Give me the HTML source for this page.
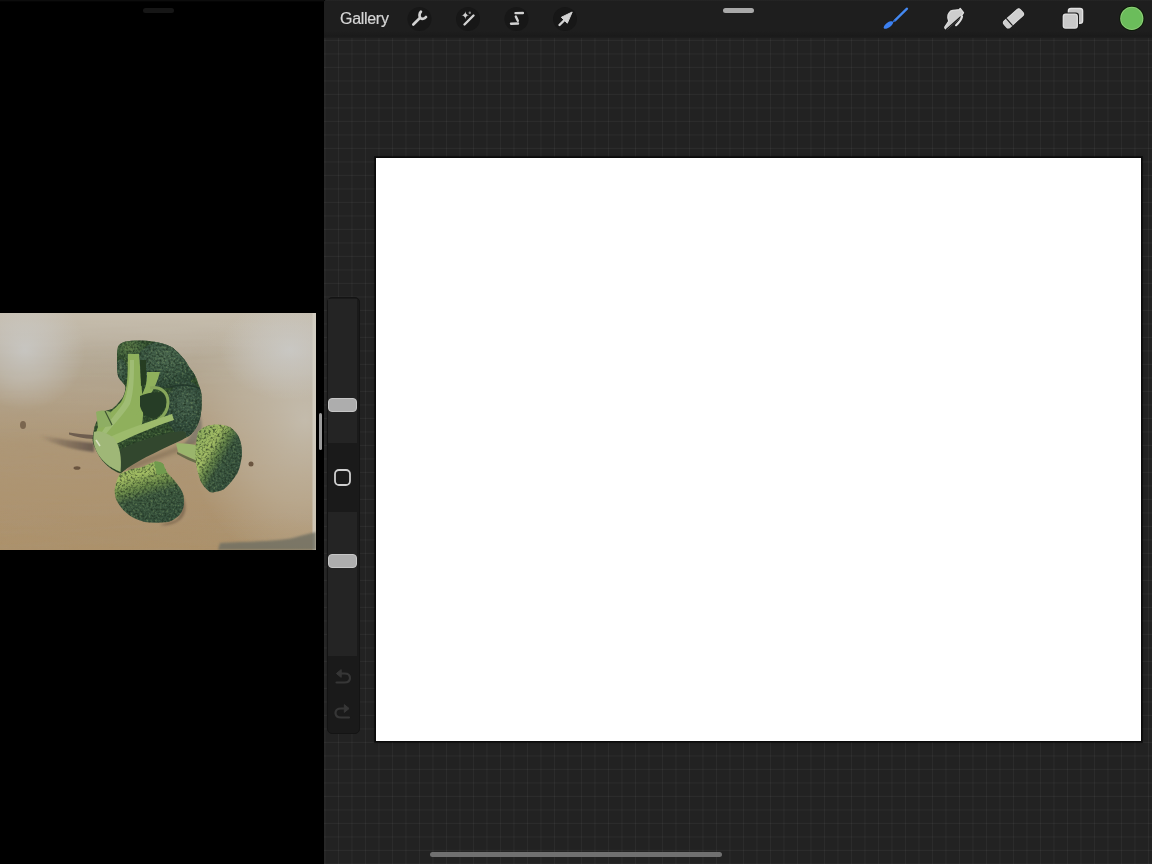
<!DOCTYPE html>
<html><head><meta charset="utf-8">
<style>
*{margin:0;padding:0;box-sizing:border-box}
html,body{width:1152px;height:864px;overflow:hidden;background:#000;font-family:"Liberation Sans",sans-serif}
.abs{position:absolute}
#lhandle{left:143px;top:8px;width:31px;height:5px;border-radius:3px;background:#161616}
#photo{left:0;top:313px;width:316px;height:237px}
#split{left:319px;top:413px;width:3px;height:37px;border-radius:2px;background:#9c9c9c}
#right{left:324px;top:0;width:828px;height:864px;background-color:#222222;
 background-image:linear-gradient(90deg, rgba(255,255,255,0.045) 1px, transparent 1px),linear-gradient(0deg, rgba(255,255,255,0.045) 1px, transparent 1px);
 background-size:13.5px 13.5px,13.5px 13.5px;background-position:0.5px 0,0 13.9px;
 border-top-left-radius:3px;overflow:hidden}
#topbar{left:324px;top:0;width:828px;height:38px;background:linear-gradient(#262626 0,#1e1e1e 1.5px,#1e1e1e 31px,#1a1a1a 36px,#1e1e1e 38px);border-top-left-radius:3px}
#thandle{left:723px;top:8px;width:31px;height:5px;border-radius:3px;background:#a9a9a9}
#gallery{left:340px;top:9.5px;font-size:16px;color:#d6d6d6;letter-spacing:-0.3px;will-change:transform;-webkit-font-smoothing:antialiased;-webkit-text-stroke:0.2px #d6d6d6}
#canvas{left:375px;top:157px;width:767px;height:585px;background:#fff;border:1px solid #0a0a0a;box-shadow:0 0 0 1px rgba(0,0,0,0.45),0 0 3px rgba(0,0,0,0.4)}
#sidebar{left:327px;top:297px;width:33px;height:437px;background:#1a1a1a;border-radius:5px;border:1px solid #141414}
.track{left:328px;width:29px;background:#242424}
.thumb{left:328px;width:29px;height:14px;border-radius:4px;background:#adadad;border:1px solid #c6c6c6}
#home{left:430px;top:852px;width:292px;height:5px;border-radius:3px;background:#707070}
</style></head>
<body>
<div class="abs" style="left:0;top:0;width:324px;height:2px;background:linear-gradient(#101010,#000)"></div>
<div class="abs" id="lhandle"></div>
<svg class="abs" id="photo" width="316" height="237" viewBox="0 313 316 237">
  <defs>
    <linearGradient id="wood" x1="0" y1="0" x2="0" y2="1">
      <stop offset="0" stop-color="#bab3a6"/>
      <stop offset="0.3" stop-color="#b3a58e"/>
      <stop offset="0.55" stop-color="#ae9776"/>
      <stop offset="1" stop-color="#ac916b"/>
    </linearGradient>
    <radialGradient id="hl1" cx="0.5" cy="0.5" r="0.5">
      <stop offset="0" stop-color="#cdcfd0" stop-opacity="0.7"/>
      <stop offset="0.5" stop-color="#cdcdcc" stop-opacity="0.42"/>
      <stop offset="1" stop-color="#cdcdcc" stop-opacity="0"/>
    </radialGradient>
    <radialGradient id="hlR" cx="0.5" cy="0.5" r="0.5">
      <stop offset="0" stop-color="#cbc7bd" stop-opacity="0.72"/>
      <stop offset="0.55" stop-color="#c6beae" stop-opacity="0.45"/>
      <stop offset="1" stop-color="#c6beae" stop-opacity="0"/>
    </radialGradient>
    <linearGradient id="topband" x1="0" y1="0" x2="0" y2="1">
      <stop offset="0" stop-color="#c8bfae" stop-opacity="0.85"/>
      <stop offset="1" stop-color="#c8bfae" stop-opacity="0"/>
    </linearGradient>
    <filter id="noise" x="0" y="0" width="100%" height="100%" color-interpolation-filters="sRGB">
      <feTurbulence type="fractalNoise" baseFrequency="0.45" numOctaves="2" seed="3" result="n0"/>
      <feGaussianBlur in="n0" stdDeviation="0.55" result="n"/>
      <feColorMatrix in="n" type="matrix" values="0 0 0 0 0.1  0 0 0 0 0.16  0 0 0 0 0.1  0 0 0 1.8 -0.8" result="dk"/>
      <feColorMatrix in="n" type="matrix" values="0 0 0 0 0.62  0 0 0 0 0.72  0 0 0 0 0.42  0 0 0 -1.2 0.5" result="lt"/>
      <feComposite in="dk" in2="SourceGraphic" operator="in" result="t1"/>
      <feComposite in="lt" in2="SourceGraphic" operator="in" result="t2"/>
      <feMerge><feMergeNode in="SourceGraphic"/><feMergeNode in="t1"/><feMergeNode in="t2"/></feMerge>
    </filter>
    <filter id="woodn" x="0" y="0" width="100%" height="100%">
      <feTurbulence type="fractalNoise" baseFrequency="0.015 0.2" numOctaves="3" seed="8" result="n"/>
      <feColorMatrix in="n" type="matrix" values="0 0 0 0 0.4  0 0 0 0 0.32  0 0 0 0 0.22  0 0 0 0.35 -0.12" result="a"/>
      <feComposite in="a" in2="SourceGraphic" operator="in" result="t"/>
      <feMerge><feMergeNode in="SourceGraphic"/><feMergeNode in="t"/></feMerge>
    </filter>
    <linearGradient id="streak" x1="0" y1="0" x2="1" y2="0">
      <stop offset="0" stop-color="#6a5a4c" stop-opacity="0"/>
      <stop offset="0.4" stop-color="#6a5a4c" stop-opacity="0.5"/>
      <stop offset="1" stop-color="#5e5048" stop-opacity="0.85"/>
    </linearGradient>
    <linearGradient id="b1g" x1="0.25" y1="0" x2="0.6" y2="1">
      <stop offset="0" stop-color="#8fae5e"/>
      <stop offset="0.22" stop-color="#a2bc62"/>
      <stop offset="0.42" stop-color="#668547"/>
      <stop offset="0.58" stop-color="#3e5a40"/>
      <stop offset="1" stop-color="#37523e"/>
    </linearGradient>
    <linearGradient id="b2g" x1="0.1" y1="0.1" x2="0.9" y2="0.8">
      <stop offset="0" stop-color="#8fae5e"/>
      <stop offset="0.3" stop-color="#a2bc64"/>
      <stop offset="0.48" stop-color="#5e7d46"/>
      <stop offset="0.62" stop-color="#3c5840"/>
      <stop offset="1" stop-color="#36503e"/>
    </linearGradient>
    <radialGradient id="flo1" cx="0.45" cy="0.35" r="0.6">
      <stop offset="0" stop-color="#5b7a47"/>
      <stop offset="0.7" stop-color="#3f5e3a"/>
      <stop offset="1" stop-color="#33502f"/>
    </radialGradient>
    <radialGradient id="flo2" cx="0.45" cy="0.35" r="0.65">
      <stop offset="0" stop-color="#4b6850"/>
      <stop offset="0.75" stop-color="#36523f"/>
      <stop offset="1" stop-color="#2d4736"/>
    </radialGradient>
    <radialGradient id="flo3" cx="0.5" cy="0.4" r="0.65">
      <stop offset="0" stop-color="#46624e"/>
      <stop offset="0.75" stop-color="#324c3c"/>
      <stop offset="1" stop-color="#2a4334"/>
    </radialGradient>
    <clipPath id="crownclip"><path d="M118 347 C120 342 126 341 136 340.5 C150 340 162 342 172.5 347.4 C180 354 186 360 189 367 C194 373 197 378 198 383 C201 390 202 395 201.5 400 C202 408 201 414 200 418 C198 425 196 429 193 432 C190 436 186 438 182 439 C170 446 155 450 142 455 C135 460 130 465 126 469 L120.5 473.5 C110 470 100 460 96 450 C93 444 92 440 93 436 C94 428 95 424 97.5 420 C100 416 103 413 105.5 411 L112.4 408.7 C117 405 121 400 123 397 C125 392 126 389 125 385.5 C122 381 119 379 118 376 C117 370 117 366 117 362 C117 356 117 351 118 347 Z"/></clipPath>
    <filter id="blur1"><feGaussianBlur stdDeviation="1.2"/></filter>
    <filter id="blur2"><feGaussianBlur stdDeviation="2"/></filter>
    <filter id="soft"><feGaussianBlur stdDeviation="0.7"/></filter>
  </defs>
  <rect x="0" y="313" width="316" height="237" fill="url(#wood)" filter="url(#woodn)"/>
  <rect x="0" y="313" width="316" height="45" fill="url(#topband)"/>
  <ellipse cx="305" cy="420" rx="120" ry="150" fill="url(#hlR)"/>
  <ellipse cx="290" cy="350" rx="70" ry="50" fill="url(#hl1)"/>
  <ellipse cx="25" cy="350" rx="60" ry="60" fill="url(#hl1)"/>
  <rect x="312.5" y="313" width="3.5" height="237" fill="#d6d2c6" opacity="0.7"/>
  <!-- shadows on wood -->
  <path d="M40 435 C55 438 72 441 94 443 L94 452 C72 450 55 444 40 438 Z" fill="url(#streak)" filter="url(#blur1)"/>
  <path d="M69 432.5 C76 433.5 84 434.5 93 435 L93 439 C84 438.5 76 437 69 434.5 Z" fill="#5e4f44" opacity="0.8" filter="url(#soft)"/>
  <ellipse cx="23" cy="425" rx="3" ry="4" fill="#7a6650" filter="url(#soft)"/>
  <ellipse cx="77" cy="468" rx="3.5" ry="1.8" fill="#6a553f" filter="url(#soft)"/>
  <ellipse cx="251" cy="464" rx="2.5" ry="2.5" fill="#6a553f" filter="url(#soft)"/>
  <path d="M218 550 L220 543 C250 541 285 542 300 536 L316 532 L316 550 Z" fill="#6e6e62" opacity="0.8" filter="url(#blur1)"/>
  <path d="M197 410 C204 420 204 436 194 444 L182 446 C192 436 197 425 197 410 Z" fill="#7e776a" opacity="0.8" filter="url(#blur1)"/>
  <path d="M128 472 C150 462 175 452 196 446 L198 441 C178 446 150 456 126 466 Z" fill="#6a5a45" opacity="0.5" filter="url(#blur2)"/>
  <!-- main broccoli silhouette -->
  <path d="M118 347 C120 342 126 341 136 340.5 C150 340 162 342 172.5 347.4 C180 354 186 360 189 367 C194 373 197 378 198 383 C201 390 202 395 201.5 400 C202 408 201 414 200 418 C198 425 196 429 193 432 C190 436 186 438 182 439 C170 446 155 450 142 455 C135 460 130 465 126 469 L120.5 473.5 C110 470 100 460 96 450 C93 444 92 440 93 436 C94 428 95 424 97.5 420 C100 416 103 413 105.5 411 L112.4 408.7 C117 405 121 400 123 397 C125 392 126 389 125 385.5 C122 381 119 379 118 376 C117 370 117 366 117 362 C117 356 117 351 118 347 Z" fill="#33502f" filter="url(#noise)"/>
  <!-- florets -->
  <g clip-path="url(#crownclip)">
  <ellipse cx="131" cy="351" rx="15" ry="11" fill="url(#flo1)" filter="url(#noise)"/>
  <ellipse cx="121" cy="372" rx="6" ry="13" fill="url(#flo2)" filter="url(#noise)"/>
  <ellipse cx="168" cy="364" rx="32" ry="24" fill="url(#flo2)" filter="url(#noise)"/>
  <ellipse cx="186" cy="409" rx="20" ry="28" fill="url(#flo3)" filter="url(#noise)"/>
  <path d="M170 387 C180 384 192 385 201 389" stroke="#24392c" stroke-width="1.6" fill="none" filter="url(#soft)"/>
  </g>
  <!-- left stem light -->
  <path d="M128 354 L139 354 C140 366 141 380 142 392 C143 404 144 414 142 424 C136 432 126 438 116 442 C108 444 100 446 96 446 C94 438 96 428 102 420 C108 414 116 408 121 402 C125 396 127 386 127.5 376 C128 368 127.5 360 128 354 Z" fill="#8fb05c" filter="url(#soft)"/>
  <path d="M130 360 L134 360 C134 376 134 392 130 404 C124 414 114 424 106 434 L102 432 C108 422 118 412 124 402 C128 392 130 376 130 360 Z" fill="#abc485" opacity="0.6" filter="url(#soft)"/>
  <!-- second stem branch -->
  <path d="M147 372 L160 372 C158 380 154 390 148 398 C144 404 140 410 136 416 L130 412 C136 404 142 396 145 388 C147 382 147 376 147 372 Z" fill="#8fb05c" filter="url(#soft)"/>
  <!-- dark gap -->
  <path d="M140 360 L146 360 L146 384 L141 386 Z" fill="#263d24" filter="url(#soft)"/>
  <!-- dark cavity -->
  <path d="M140 396 C148 392 160 391 168 394 C168 404 164 412 156 418 C148 419 142 414 140 406 Z" fill="#263c25" filter="url(#soft)"/>
  <path d="M150 388 C160 386 168 392 168 402 C168 410 164 416 158 420" stroke="#87a65a" stroke-width="3" fill="none" filter="url(#soft)"/>
  <!-- light stem band crossing -->
  <path d="M108 438 C124 430 148 422 172 414 L174 420 C150 428 128 438 112 446 Z" fill="#9dbb6c" filter="url(#soft)"/>
  <!-- dark underside -->
  <path d="M121 449 C140 440 160 434 182 431 C188 432 188 437 182 440 C165 448 142 458 126 469 L120.5 473 C118 465 118 456 121 449 Z" fill="#33472f" filter="url(#soft)"/>
  <!-- leaf stub -->
  <path d="M96 412 C100 410 106 410 110 412 L112 426 L98 428 Z" fill="#8eae64" filter="url(#soft)"/>
  <path d="M105 411 L112 425" stroke="#3c5030" stroke-width="1.1"/>
  <!-- base cut end -->
  <path d="M94 432 C98 430 106 432 114 438 C120 446 122 458 120.5 472 C110 468 100 460 96 450 C93 444 93 438 94 432 Z" fill="#9fb777" filter="url(#soft)"/>
  <path d="M96 440 L100 446" stroke="#e6ead6" stroke-width="1.5" opacity="0.8"/>
  <!-- small broccoli B1 (bottom) -->
  <path d="M178 490 C186 498 188 510 182 518 C176 524 168 526 160 525 L176 520 C184 512 184 500 178 490 Z" fill="#5e4c3a" opacity="0.5" filter="url(#blur1)"/>
  <path d="M114.7 489.6 C116 482 118 476 120.5 473.5 C128 470 134 468 140 467.7 C146 466 150 463 154 462 C158 461 161 462 163.3 464.2 C165 468 166 471 168 473.5 C172 478 176 482 179.5 487.3 C183 492 184 496 184 501.2 C184 508 182 512 179.5 515 C175 519 172 521 168 522 C160 523 152 523 144.8 522 C137 520 131 517 126.3 512.8 C122 509 119 505 117 501 C115 497 114.5 493 114.7 489.6 Z" fill="url(#b1g)" filter="url(#noise)"/>
  <path d="M154 462 C158 461 161 462 163.3 464.2 L167 473 L157 475 Z" fill="#6f9a4e" filter="url(#soft)"/>
  <!-- small broccoli B2 stem -->
  <path d="M176 443.4 C184 443 192 444 199 446 L201 462 C194 460 186 456 178 452 Z" fill="#9ab56c" filter="url(#soft)"/>
  <path d="M177 452 C186 456 194 460 201 462 L201 465 C192 462 184 458 177 454 Z" fill="#4a5a35" opacity="0.7" filter="url(#soft)"/>
  <!-- B2 floret -->
  <path d="M198 431.8 C202 428 207 425 212 424.9 C218 424 225 425 230.4 427.2 C235 431 238 434 239.6 438.7 C242 445 242 450 242 455 C241 462 240 468 237.3 473.5 C233 480 228 486 223.5 489.6 C218 492 213 493 209.6 492 C205 488 202 484 200.3 480.4 C198 474 196 466 195.7 459.6 C195 450 196 440 198 431.8 Z" fill="url(#b2g)" filter="url(#noise)"/>
</svg>
<div class="abs" id="split"></div>
<div class="abs" id="right"></div>
<div class="abs" id="topbar"></div>
<div class="abs" id="thandle"></div>
<svg class="abs" style="left:0;top:0" width="1152" height="40" viewBox="0 0 1152 40">
  <g fill="#171717">
    <circle cx="419.5" cy="19" r="12"/>
    <circle cx="468" cy="19" r="12"/>
    <circle cx="516.5" cy="19" r="12"/>
    <circle cx="565" cy="19" r="12"/>
  </g>
  <g stroke="#d2d2d2" stroke-width="2.4" stroke-linecap="round" stroke-linejoin="round" fill="none">
    <!-- wrench -->
    <path d="M413.3 24.5 L419.6 18.3" stroke-width="2.6"/>
    <path d="M420.9 11.8 C419.2 13.5 419 16.5 420.5 18 C422 19.4 424.5 19 426 17" stroke-width="2.7"/>
    <!-- wand -->
    <path d="M464.5 24.5 L473.5 15.5"/>
    <!-- selection -->
    <path d="M515.5 13.1 L522.9 13"/>
    <path d="M515.8 16.6 L517.8 20.8"/>
    <path d="M511 23.8 L518 23.5"/>
    <!-- arrow shaft -->
    <path d="M559.5 25 L566.5 18"/>
  </g>
  <!-- wand sparkle -->
  <path d="M465.3 11.2 Q465.6 14.9 469.2 15.2 Q465.6 15.5 465.3 19.2 Q465 15.5 461.4 15.2 Q465 14.9 465.3 11.2 Z" fill="#d0d0d0"/>
  <circle cx="469.8" cy="12.8" r="1.2" fill="#8a8a8a"/>
  <!-- arrow head -->
  <path d="M572.2 12 L561.3 17.3 L567.3 23.2 Z" fill="#d2d2d2" stroke="#d2d2d2" stroke-width="1" stroke-linejoin="round"/>
  <!-- brush -->
  <path d="M895 20.3 L907 8.7" stroke="#4489f2" stroke-width="2.3" stroke-linecap="round"/>
  <path d="M893.6 21.4 L894.8 20.3" stroke="#2f6fd8" stroke-width="1.6" stroke-linecap="round"/>
  <ellipse cx="888.4" cy="25" rx="5.6" ry="2.5" transform="rotate(-36 888.4 25)" fill="#3c80f0"/>
  <!-- smudge -->
  <g transform="translate(938 5)">
    <path d="M13 5.8 C16 5.3 19 5 21.3 4.6 L22.2 3.4 L25.5 7.6 C24.5 9.5 23 11.5 21.6 12.8 L9.4 23.4 C8.2 24.4 6.4 23.6 6.8 22 L10.8 16.2 C10 14 9.4 12 10 10 C10.8 8 12 6.6 13 5.8 Z" fill="#cdcdcd" stroke="#dcdcdc" stroke-width="1.3" stroke-linejoin="round"/>
    <path d="M8.6 24.3 L22.4 12" stroke="#161616" stroke-width="1.3" stroke-linecap="round"/>
    <path d="M24 11.6 C23.4 14.4 21 17.6 18.1 20.2" stroke="#dedede" stroke-width="2.2" stroke-linecap="round" fill="none"/>
  </g>
  <!-- eraser -->
  <g transform="translate(1013.5 18.4) rotate(-41.7)">
    <rect x="-11" y="-4.3" width="22" height="8.6" rx="2.5" fill="#cfcfcf" stroke="#dedede" stroke-width="1"/>
    <path d="M-5.5 -4.8 L-5.5 4.8" stroke="#151515" stroke-width="1.1"/>
  </g>
  <!-- layers -->
  <rect x="1068.4" y="8.5" width="14.2" height="14.8" rx="2.6" fill="#c4c4c4" stroke="#e2e2e2" stroke-width="1.4"/>
  <rect x="1061.6" y="12.4" width="17.4" height="17.4" rx="3.2" fill="#1a1a1a"/>
  <rect x="1063.3" y="14.1" width="14" height="14" rx="2.3" fill="#c9c9c9" stroke="#dedede" stroke-width="1.3"/>
  <!-- color -->
  <circle cx="1131.8" cy="18.4" r="12.6" fill="#0b1a08"/>
  <circle cx="1131.8" cy="18.4" r="11.6" fill="#8ccf76"/>
  <circle cx="1131.8" cy="18.4" r="10.6" fill="#6bbd5b"/>
</svg>

<div class="abs" id="gallery">Gallery</div>
<div class="abs" id="canvas"></div>
<div class="abs" id="sidebar"></div>
<div class="abs track" style="top:299px;height:144px"></div>
<div class="abs thumb" style="top:398px"></div>
<div class="abs track" style="top:512px;height:144px"></div>
<div class="abs thumb" style="top:554px"></div>
<svg class="abs" style="left:320px;top:440px" width="50" height="300" viewBox="320 440 50 300">
  <rect x="335" y="470" width="15" height="15" rx="4" fill="none" stroke="#cfcfcf" stroke-width="1.8"/>
  <g stroke="#363636" stroke-width="2.2" fill="none" stroke-linecap="round" stroke-linejoin="round">
    <path d="M336.5 682.5 L344.5 682.5 C348.5 682.5 350 680.5 350 678 C350 675.5 348.5 673.5 344.5 673.5 L340 673.5"/>
    <path d="M349 717.5 L341 717.5 C337 717.5 335.5 715.5 335.5 713 C335.5 710.5 337 708.5 341 708.5 L345.5 708.5"/>
  </g>
  <path d="M341.2 669.6 L336.4 673.5 L341.2 677.4 Z" fill="#363636" stroke="#363636" stroke-width="1" stroke-linejoin="round"/>
  <path d="M344.3 704.6 L349.1 708.5 L344.3 712.4 Z" fill="#363636" stroke="#363636" stroke-width="1" stroke-linejoin="round"/>
</svg>
<div class="abs" id="home"></div>
</body></html>
